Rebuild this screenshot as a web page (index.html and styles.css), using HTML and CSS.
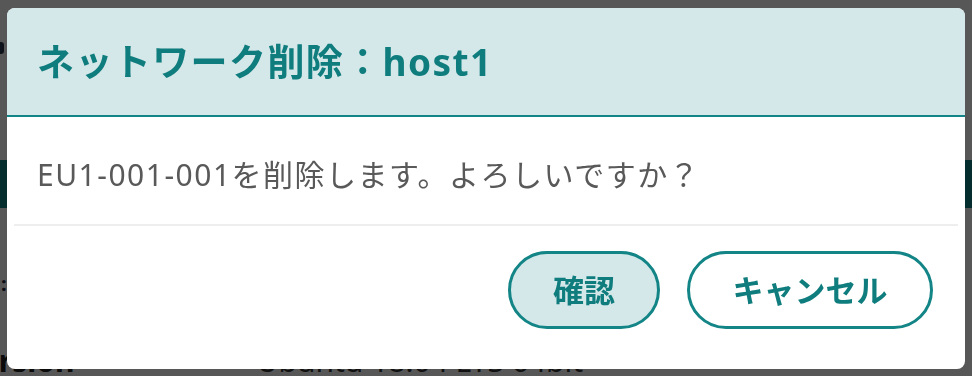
FILE: index.html
```html
<!DOCTYPE html>
<html lang="ja">
<head>
<meta charset="utf-8">
<title>ネットワーク削除</title>
<link rel="stylesheet" href="styles.css">
</head>
<body>
<div class="page">
  <div class="page-top"><span class="page-dot"></span></div>
  <div class="page-bar"></div>
  <div class="page-field">:</div>
  <div class="page-row">
    <span class="page-label">Version</span>
    <span class="page-value">Ubuntu 18.04 LTS 64bit</span>
  </div>
</div>
<div class="overlay">
  <div class="dialog">
    <div class="dialog-header">
      <h2 class="dialog-title">ネットワーク削除：host1</h2>
    </div>
    <div class="dialog-body">
      <p class="dialog-message">EU1-001-001を削除します。よろしいですか？</p>
    </div>
    <div class="dialog-divider"></div>
    <div class="dialog-footer">
      <button class="btn btn-primary">確認</button>
      <button class="btn btn-secondary">キャンセル</button>
    </div>
  </div>
</div>
</body>
</html>
```

FILE: styles.css
```css
html, body {
  margin: 0;
  padding: 0;
  width: 972px;
  height: 376px;
  overflow: hidden;
  font-family: "Noto Sans", "Noto Sans CJK JP", sans-serif;
  background: #ffffff;
}

.page {
  display: flex;
  flex-direction: column;
  height: 376px;
}

.page-top {
  height: 165px;
  display: flex;
  align-items: flex-start;
  padding-top: 42px;
  box-sizing: border-box;
}

.page-dot {
  display: block;
  width: 6px;
  height: 12px;
  margin-left: -2px;
  border-radius: 3px;
  background: #2a3550;
}

.page-bar {
  height: 50px;
  background: #138586;
}

.page-field {
  margin-top: 66px;
  margin-left: 1px;
  font-size: 20px;
  font-weight: 700;
  color: #1f2a44;
  line-height: 20px;
}

.page-row {
  margin-top: 52px;
  display: flex;
  gap: 182px;
  font-size: 30px;
  line-height: 30px;
  color: #222;
}

.page-label {
  margin-left: -38px;
  font-weight: 700;
}

.page-value {
  color: #333;
}

.overlay {
  position: fixed;
  inset: 0;
  background: rgba(0, 0, 0, 0.66);
  display: flex;
  padding: 8px 7px 7px 7px;
  box-sizing: border-box;
}

.dialog {
  flex: 1;
  background: #ffffff;
  border-radius: 8px;
  overflow: hidden;
  display: flex;
  flex-direction: column;
}

.dialog-header {
  height: 107px;
  background: #d4e7e9;
  border-bottom: 2px solid #138586;
  display: flex;
  align-items: center;
  padding-left: 30px;
}

.dialog-title {
  margin: 0;
  font-size: 37px;
  font-weight: 700;
  letter-spacing: 1.4px;
  color: #0f7c7d;
  line-height: 1;
}

.dialog-body {
  height: 107px;
  display: flex;
  align-items: center;
  padding-left: 30px;
  padding-top: 8px;
  box-sizing: border-box;
}

.dialog-message {
  margin: 0;
  font-size: 30px;
  letter-spacing: 1.5px;
  line-height: 1.4;
  color: #595959;
}

.dialog-divider {
  height: 2px;
  margin: 0 7px;
  background: #eeeeee;
}

.dialog-footer {
  flex: 1;
  display: flex;
  justify-content: flex-end;
  align-items: flex-start;
  gap: 27px;
  padding: 25px 32px 0 0;
}

.btn {
  height: 78px;
  padding: 0 42px;
  border: 3px solid #138586;
  border-radius: 39px;
  font-family: "Noto Sans", "Noto Sans CJK JP", sans-serif;
  font-size: 31px;
  font-weight: 700;
  color: #0f7c7d;
  line-height: 1;
  cursor: pointer;
}

.btn-primary {
  width: 152px;
  background: #d4e7e9;
}

.btn-secondary {
  width: 246px;
  background: #ffffff;
}
```
